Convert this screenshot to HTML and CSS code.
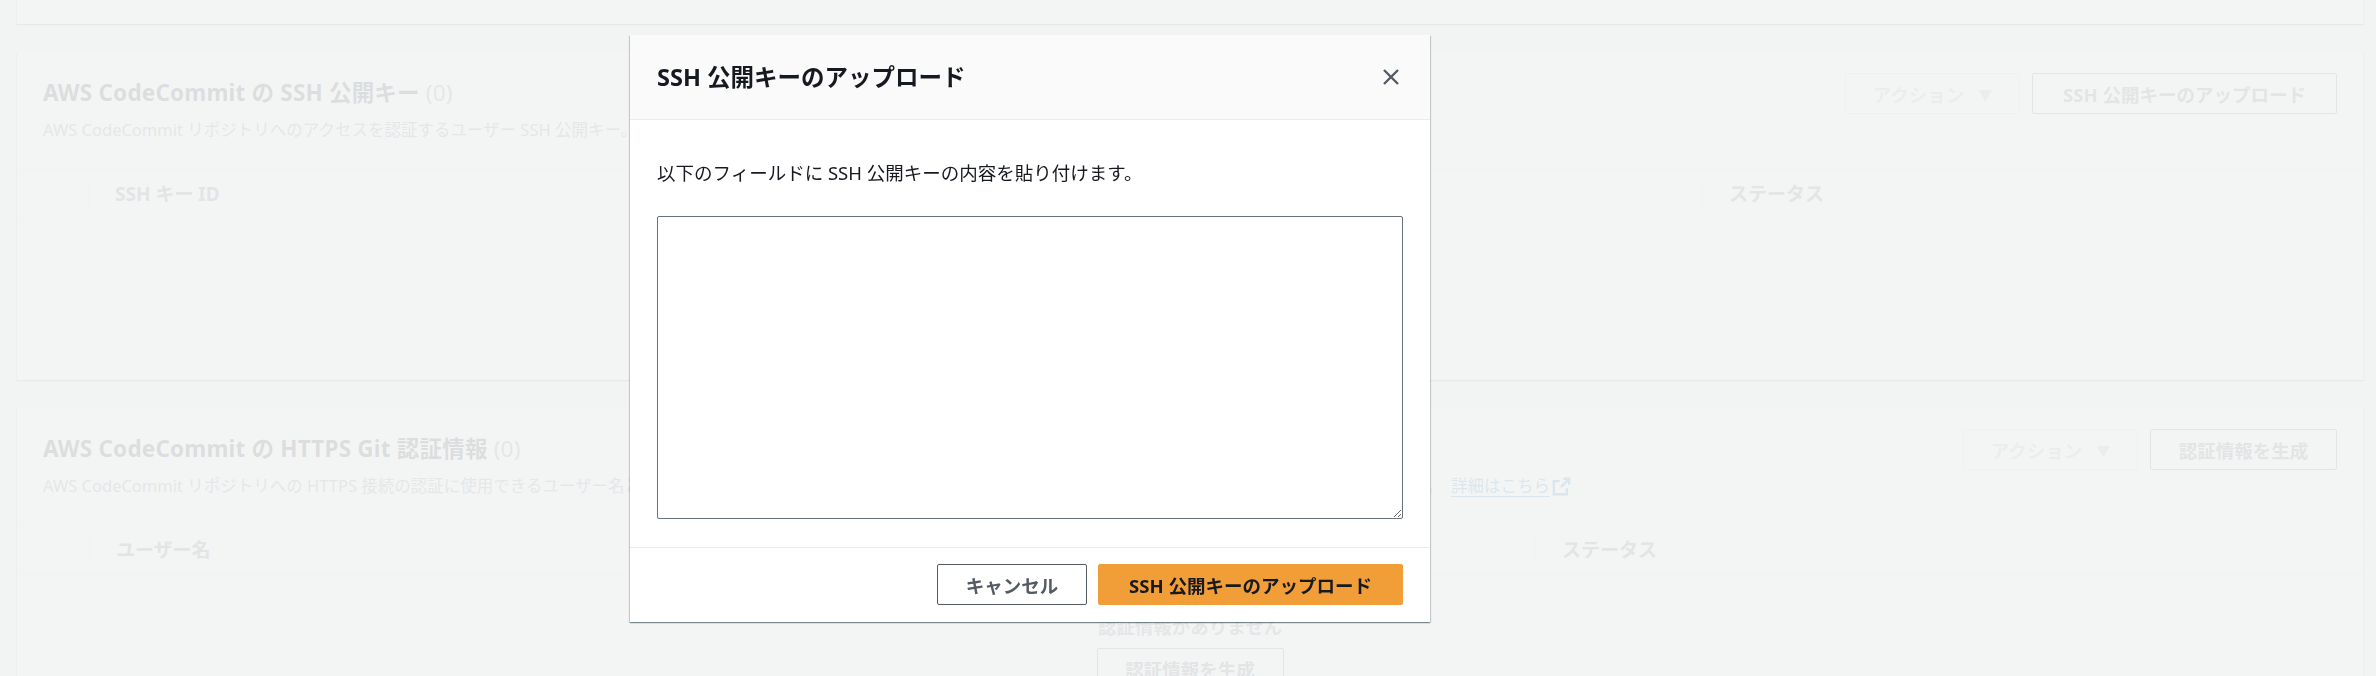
FILE: index.html
```html
<!DOCTYPE html>
<html lang="ja">
<head>
<meta charset="utf-8">
<title>SSH 公開キーのアップロード</title>
<link rel="stylesheet" href="styles.css">
</head>
<body>
<div class="page">
  <section class="card card-top"></section>

  <section class="card">
    <div class="card-head">
      <div class="head-text">
        <h2 class="card-title">AWS CodeCommit の SSH 公開キー <span class="count">(0)</span></h2>
        <p class="card-desc">AWS CodeCommit リポジトリへのアクセスを認証するユーザー SSH 公開キー。1 人のユーザーにつき最大 5 つのキーを保持できます。</p>
      </div>
      <div class="head-actions">
        <button class="btn btn-disabled">アクション <span class="caret">▼</span></button>
        <button class="btn btn-upload">SSH 公開キーのアップロード</button>
      </div>
    </div>
    <div class="table-head cols-ssh">
      <div class="th"></div>
      <div class="th"><span class="th-label">SSH キー ID</span></div>
      <div class="th"><span class="th-label">アップロード日</span></div>
      <div class="th"><span class="th-label">ステータス</span></div>
    </div>
    <div class="empty">
      <p class="empty-text">SSH 公開キーがありません</p>
      <button class="btn btn-upload">SSH 公開キーのアップロード</button>
    </div>
  </section>

  <section class="card">
    <div class="card-head">
      <div class="head-text">
        <h2 class="card-title">AWS CodeCommit の HTTPS Git 認証情報 <span class="count">(0)</span></h2>
        <p class="card-desc">AWS CodeCommit リポジトリへの HTTPS 接続の認証に使用できるユーザー名とパスワード。ユーザーごとに最大 2 セットの認証情報を作成でき、Git クライアントや IDE で使用できます。<a class="link" href="#">詳細はこちら</a><svg class="ext" viewBox="0 0 16 16" width="19" height="19" aria-hidden="true"><path d="M9.5 1.5h5v5M14.5 1.5L7.5 8.5M12.5 9.5v5h-11v-11h5" fill="none" stroke="currentColor" stroke-width="2"/></svg></p>
      </div>
      <div class="head-actions">
        <button class="btn btn-disabled">アクション <span class="caret">▼</span></button>
        <button class="btn btn-generate">認証情報を生成</button>
      </div>
    </div>
    <div class="table-head cols-https">
      <div class="th"></div>
      <div class="th"><span class="th-label">ユーザー名</span></div>
      <div class="th"><span class="th-label">作成日</span></div>
      <div class="th"><span class="th-label">ステータス</span></div>
    </div>
    <div class="empty">
      <p class="empty-text">認証情報がありません</p>
      <button class="btn btn-generate">認証情報を生成</button>
    </div>
  </section>
</div>

<div class="overlay"></div>

<div class="modal" role="dialog" aria-labelledby="modal-title">
  <div class="modal-head">
    <h2 class="modal-title" id="modal-title">SSH 公開キーのアップロード</h2>
    <button class="close" aria-label="閉じる">
      <svg viewBox="0 0 18 18" width="18" height="18"><path d="M2 2L16 16M16 2L2 16" fill="none" stroke="currentColor" stroke-width="2.4"/></svg>
    </button>
  </div>
  <div class="modal-body">
    <p class="body-text">以下のフィールドに SSH 公開キーの内容を貼り付けます。</p>
    <textarea class="key-input"></textarea>
  </div>
  <div class="modal-foot">
    <button class="mbtn mbtn-cancel">キャンセル</button>
    <button class="mbtn mbtn-primary">SSH 公開キーのアップロード</button>
  </div>
</div>
</body>
</html>
```

FILE: styles.css
```css
* { box-sizing: border-box; }

html, body {
  margin: 0;
  padding: 0;
  height: 100%;
  overflow: hidden;
}

body {
  background: #f2f3f3;
  font-family: "Noto Sans", "Noto Sans CJK JP", sans-serif;
  color: #16191f;
}

.page {
  padding: 0 13px 0 17px;
  display: flex;
  flex-direction: column;
  gap: 28px;
}

.card {
  background: #ffffff;
  box-shadow: 0 1px 1px 0 rgba(0, 28, 36, 0.3), 1px 1px 1px 0 rgba(0, 28, 36, 0.15), -1px 1px 1px 0 rgba(0, 28, 36, 0.15);
}

.card-top { height: 24px; }

.card-head {
  display: flex;
  justify-content: space-between;
  align-items: flex-start;
  padding: 21px 26px 26px 26px;
}

.card-title {
  margin: 5px 0 0 0;
  font-size: 22.5px;
  line-height: 30px;
  font-weight: 700;
  color: #16191f;
  white-space: nowrap;
  letter-spacing: 0.2px;
}

.count {
  font-weight: 400;
  color: #687078;
}

.card-desc {
  margin: 10px 0 0 0;
  font-size: 16.5px;
  line-height: 24px;
  color: #687078;
  white-space: nowrap;
  display: flex;
  align-items: center;
}

.link {
  color: #0073bb;
  text-decoration: underline;
  text-underline-offset: 4px;
  margin-left: 8px;
}

.ext {
  color: #0073bb;
  margin-left: 2px;
}

.head-actions {
  display: flex;
  gap: 12px;
}

.btn {
  height: 41px;
  padding: 0 20px;
  border: 1px solid #545b64;
  border-radius: 2px;
  background: #ffffff;
  font-family: inherit;
  font-size: 18.5px;
  font-weight: 700;
  color: #545b64;
  display: inline-flex;
  align-items: center;
  justify-content: center;
  white-space: nowrap;
}

.btn-disabled {
  border-color: #d5dbdb;
  color: #aab7b8;
  width: 175px;
}

.btn-upload { width: 305px; }
.btn-generate { width: 187px; }

.caret {
  font-size: 14px;
  margin-left: 14px;
}

.table-head {
  display: grid;
  height: 52px;
  border-top: 1px solid #eaeded;
  border-bottom: 1px solid #eaeded;
  background: #fafafa;
}

.cols-ssh { grid-template-columns: 71px 807px 807px 1fr; }
.cols-https { grid-template-columns: 72px 723px 723px 1fr; }

.th {
  display: flex;
  align-items: center;
}

.th-label {
  border-left: 1px solid #eaeded;
  padding-left: 26px;
  line-height: 26px;
  font-size: 19px;
  font-weight: 700;
  color: #545b64;
  white-space: nowrap;
}

.empty {
  display: flex;
  flex-direction: column;
  align-items: center;
  padding: 39px 0 47px 0;
}

.empty-text {
  margin: 0 0 9px 0;
  font-size: 18.5px;
  line-height: 24px;
  font-weight: 700;
  color: #687078;
}

.overlay {
  position: fixed;
  inset: 0;
  background: rgba(242, 243, 243, 0.9);
}

.modal {
  position: fixed;
  left: 630px;
  top: 35px;
  width: 800px;
  background: #ffffff;
  box-shadow: 0 1px 1px 0 rgba(0, 28, 36, 0.3), 1px 1px 1px 0 rgba(0, 28, 36, 0.15), -1px 1px 1px 0 rgba(0, 28, 36, 0.15);
}

.modal-head {
  height: 85px;
  padding: 0 27px;
  display: flex;
  align-items: center;
  justify-content: space-between;
  background: #fafafa;
  border-bottom: 1px solid #eaeded;
}

.modal-title {
  margin: 0;
  font-size: 23.5px;
  line-height: 30px;
  font-weight: 700;
  color: #16191f;
}

.close {
  border: 0;
  background: transparent;
  padding: 0;
  margin-right: 3px;
  width: 18px;
  height: 18px;
  color: #545b64;
  display: flex;
}

.modal-body {
  padding: 40px 27px 28px 27px;
}

.body-text {
  margin: 0 0 30px 0;
  font-size: 18.5px;
  line-height: 26px;
  color: #16191f;
}

.key-input {
  display: block;
  width: 100%;
  height: 303px;
  border: 1px solid #687078;
  border-radius: 2px;
  background: #ffffff;
  font-family: inherit;
  font-size: 18px;
}

.modal-foot {
  border-top: 1px solid #eaeded;
  padding: 16px 27px 17px 27px;
  display: flex;
  justify-content: flex-end;
  gap: 11px;
}

.mbtn {
  height: 41px;
  border-radius: 2px;
  font-family: inherit;
  font-size: 18.5px;
  font-weight: 700;
  display: inline-flex;
  align-items: center;
  justify-content: center;
  white-space: nowrap;
}

.mbtn-cancel {
  width: 150px;
  border: 1px solid #545b64;
  background: #ffffff;
  color: #545b64;
}

.mbtn-primary {
  width: 305px;
  border: 1px solid #f19e39;
  background: #f19e39;
  color: #16191f;
}
```
